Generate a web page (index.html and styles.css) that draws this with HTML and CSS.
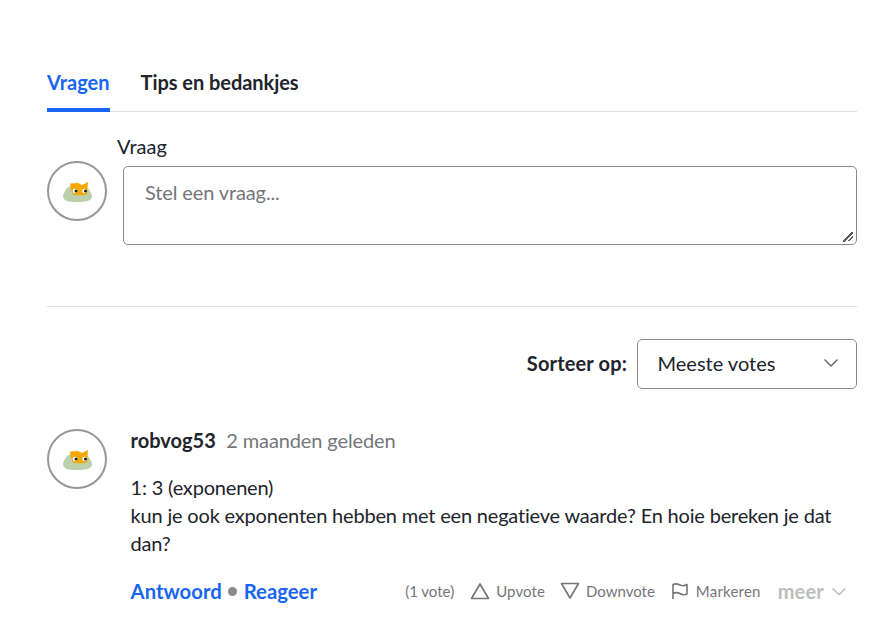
FILE: index.html
```html
<!DOCTYPE html>
<html lang="nl">
<head>
<meta charset="utf-8">
<title>Vragen</title>
<link rel="stylesheet" href="styles.css">
</head>
<body>
<main class="page">
  <nav class="tabs">
    <a class="tab tab-active">Vragen</a>
    <a class="tab">Tips en bedankjes</a>
  </nav>
  <section class="ask">
    <label class="ask-label">Vraag</label>
    <div class="ask-row">
      <div class="avatar avatar-raised">
        <svg width="30" height="22" viewBox="0 0 30 22"><path d="M1 16C2 11 5 7 9 6L24 6C27 9 30 13 30 17C29 21 24 22 15 22C6 22 1 21 1 16Z" fill="#bdd0ae"/><path d="M8 3.500L16 3L20 5L26 2L25 14.500C22 15.500 15 15.500 11.500 15C9.500 12 8.500 8 8 3.500Z" fill="#f7a800"/><circle cx="13" cy="11" r="2.300" fill="#fff"/><circle cx="22.500" cy="11" r="2.300" fill="#fff"/><circle cx="14" cy="11" r="1.500" fill="#1d1d1d"/><circle cx="23.500" cy="11" r="1.500" fill="#1d1d1d"/></svg>
      </div>
      <textarea class="ask-input" placeholder="Stel een vraag..."></textarea>
    </div>
  </section>
  <div class="sort">
    <span class="sort-label">Sorteer op:</span>
    <div class="select">
      <span>Meeste votes</span>
      <svg width="16" height="10" viewBox="0 0 16 10"><path d="M1.500 1.500L8 8L14.500 1.500" fill="none" stroke="#6b6b6b" stroke-width="1.500"/></svg>
    </div>
  </div>
  <article class="post">
    <div class="avatar">
      <svg width="30" height="22" viewBox="0 0 30 22"><path d="M1 16C2 11 5 7 9 6L24 6C27 9 30 13 30 17C29 21 24 22 15 22C6 22 1 21 1 16Z" fill="#bdd0ae"/><path d="M8 3.500L16 3L20 5L26 2L25 14.500C22 15.500 15 15.500 11.500 15C9.500 12 8.500 8 8 3.500Z" fill="#f7a800"/><circle cx="13" cy="11" r="2.300" fill="#fff"/><circle cx="22.500" cy="11" r="2.300" fill="#fff"/><circle cx="14" cy="11" r="1.500" fill="#1d1d1d"/><circle cx="23.500" cy="11" r="1.500" fill="#1d1d1d"/></svg>
    </div>
    <div class="post-body">
      <div class="post-head"><strong class="author">robvog53</strong><span class="time">2 maanden geleden</span></div>
      <p class="post-text">1: 3 (exponenen)<br>kun je ook exponenten hebben met een negatieve waarde? En hoie bereken je dat dan?</p>
      <div class="post-foot">
        <div class="links"><a>Antwoord</a><span class="dot"></span><a>Reageer</a></div>
        <div class="actions">
          <span class="votes">(1 vote)</span>
          <span class="action action-up"><svg width="20" height="18" viewBox="0 0 20 18"><path d="M10 2L18.500 16.500H1.500Z" fill="none" stroke="#77777c" stroke-width="1.700" stroke-linejoin="round"/></svg>Upvote</span>
          <span class="action action-down"><svg width="20" height="18" viewBox="0 0 20 18"><path d="M10 16L18.500 1.500H1.500Z" fill="none" stroke="#77777c" stroke-width="1.700" stroke-linejoin="round"/></svg>Downvote</span>
          <span class="action action-flag"><svg width="18" height="18" viewBox="0 0 18 18"><path d="M2 17V2.500C5 1 7 2 9 3C11 4 13.500 4 16 2.500V12C13.500 13 11 13 9 11.500C7 10.500 5 10 2 11.500" fill="none" stroke="#77777c" stroke-width="1.600" stroke-linejoin="round"/></svg>Markeren</span>
          <span class="more">meer<svg width="16" height="9" viewBox="0 0 16 9"><path d="M1.500 1.500L8 7.500L14.500 1.500" fill="none" stroke="#bdbdbd" stroke-width="1.500"/></svg></span>
        </div>
      </div>
    </div>
  </article>
</main>
</body>
</html>
```
FILE: styles.css
```css
* { box-sizing: border-box; }
html, body { margin: 0; padding: 0; background: #fff; }
body { font-family: Lato, sans-serif; color: #21242c; overflow: hidden; height: 628px; }
.page { width: 810px; margin-left: 47px; padding-top: 64px; }
.tabs { display: flex; gap: 31px; height: 48px; border-bottom: 1px solid #dfdfe0; }
.tab { font-size: 20px; font-weight: 700; line-height: 36px; height: 48px; color: #21242c; letter-spacing: -0.05px; }
.tab-active { color: #1865f2; border-bottom: 4px solid #1865f2; letter-spacing: 0; }
.ask { padding-top: 22px; height: 195px; border-bottom: 1px solid #dfdfe0; }
.ask-label { display: block; margin-left: 70px; font-size: 20px; line-height: 24px; height: 24px; }
.ask-row { display: flex; justify-content: space-between; margin-top: 8px; }
.avatar { width: 60px; height: 60px; flex: none; border: 2px solid #979797; border-radius: 50%; display: flex; align-items: center; justify-content: center; background: #fff; }
.avatar-raised { margin-top: -5px; }
.ask-input { width: 734px; height: 79px; border: 1px solid #8b8b8f; border-radius: 5px; padding: 12px 21px; font: 20px/26px Lato, sans-serif; letter-spacing: -0.12px; color: #21242c; resize: vertical; outline: none; display: block; }
.ask-input::placeholder { color: #75767a; opacity: 1; }
.ask-input::-webkit-resizer {
  background:
    linear-gradient(135deg, transparent 44%, #5a5a5a 44% 56%, transparent 56%) 2px 3px / 10px 10px no-repeat,
    linear-gradient(135deg, transparent 40%, #5a5a5a 40% 60%, transparent 60%) 7px 7px / 5px 5px no-repeat;
}
.sort { display: flex; justify-content: flex-end; align-items: center; gap: 10px; margin-top: 32px; }
.sort-label { font-size: 20px; font-weight: 700; letter-spacing: 0.15px; line-height: 48px; height: 50px; }
.select { width: 220px; height: 50px; border: 1px solid #8b8b8f; border-radius: 5px; display: flex; align-items: center; justify-content: space-between; padding: 0 17px 2px 19.5px; font-size: 20px; }
.post { display: flex; gap: 23.6px; margin-top: 40px; }
.post-body { flex: 1; min-width: 0; }
.post-head { display: flex; align-items: baseline; gap: 10.5px; line-height: 26px; margin-top: -2px; }
.author { font-size: 20px; font-weight: 700; }
.time { font-size: 20px; letter-spacing: -0.12px; color: #75767a; }
.post-text { margin: 20px 0 0; font-size: 20px; line-height: 28px; letter-spacing: -0.19px; }
.post-foot { display: flex; justify-content: space-between; align-items: center; margin-top: 22px; }
.links { display: flex; align-items: center; gap: 6.5px; font-size: 20.3px; font-weight: 700; color: #1865f2; }
.dot { width: 9px; height: 9px; border-radius: 50%; background: #8a8b8f; }
.actions { display: flex; align-items: center; gap: 16px; font-size: 15px; color: #75767a; margin-right: 10px; }
.action { display: inline-flex; align-items: center; gap: 6px; }
.action-up { letter-spacing: 0.1px; }
.action-down { margin-left: -1px; }
.action-flag { gap: 7px; letter-spacing: 0.2px; }
.more { display: inline-flex; align-items: center; gap: 7px; font-size: 20px; font-weight: 700; letter-spacing: 0.2px; color: #bdbdbd; margin-left: 1px; }
```
